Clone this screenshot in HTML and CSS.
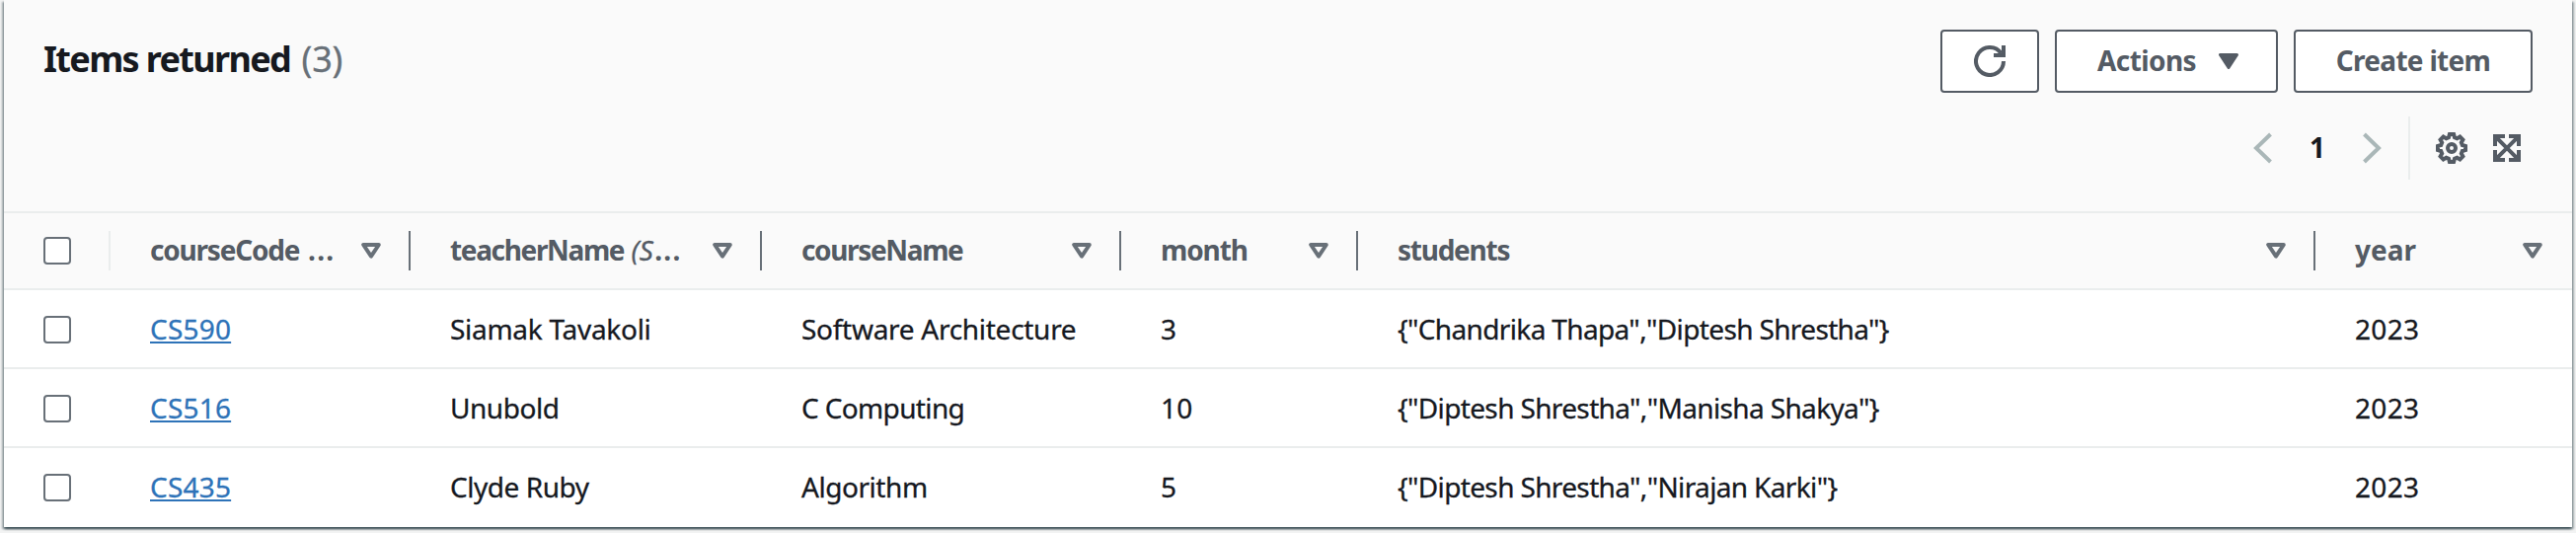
FILE: index.html
```html
<!DOCTYPE html>
<html lang="en">
<head>
<meta charset="utf-8">
<title>Items returned</title>
<link rel="stylesheet" href="styles.css">
</head>
<body>
<svg class="defs" width="0" height="0">
  <symbol id="sort" viewBox="0 0 20 16"><path d="M2.2 2h15.6L10 13.6z" fill="none" stroke="currentColor" stroke-width="4" stroke-linejoin="round"/></symbol>
</svg>
<main class="card">
  <header class="head">
    <h1 class="title"><span class="title-text">Items returned</span> <span class="count">(3)</span></h1>
    <div class="tools">
      <div class="buttons">
        <button class="btn btn-icon" aria-label="Refresh">
          <svg width="32" height="32" viewBox="0 0 32 32" fill="none" stroke="currentColor" stroke-width="4"><path d="M30 16A14 14 0 1 1 27.5 8"/><path d="M30 0v10H20" /></svg>
        </button>
        <button class="btn btn-actions"><span class="t-actions">Actions</span>
          <svg width="20" height="16" viewBox="0 0 20 16"><path d="M1.5 1.5h17L10 14.5z" fill="currentColor" stroke="currentColor" stroke-width="3" stroke-linejoin="round"/></svg>
        </button>
        <button class="btn btn-create"><span class="t-create">Create item</span></button>
      </div>
      <div class="pager">
        <svg class="chev" width="20" height="32" viewBox="0 0 20 32"><path d="M17.500 2L3 16l14.500 14" fill="none" stroke="currentColor" stroke-width="4"/></svg>
        <span class="page">1</span>
        <svg class="chev" width="20" height="32" viewBox="0 0 20 32"><path d="M1.500 2L16 16 1.500 30" fill="none" stroke="currentColor" stroke-width="4"/></svg>
        <span class="rule"></span>
        <svg class="gear" width="32" height="32" viewBox="0 0 32 32" fill="none" stroke="currentColor" stroke-width="4"><path d="M13.900 2h4.200l.9 3.200 2.500 1 2.900-1.600 3 3-1.600 2.900 1 2.500 3.200.9v4.200l-3.200.9-1 2.500 1.600 2.900-3 3-2.900-1.600-2.500 1-.9 3.200h-4.200l-.9-3.200-2.500-1-2.900 1.600-3-3 1.600-2.900-1-2.500-3.200-.9v-4.200l3.200-.9 1-2.500-1.600-2.900 3-3 2.900 1.600 2.500-1z"/><circle cx="16" cy="16" r="4"/></svg>
        <svg class="expand" width="28" height="28" viewBox="0 0 28 28" fill="none" stroke="currentColor" stroke-width="4"><path d="M2 12V2h10M16 2h10v10M26 16v10H16M12 26H2V16M2 2l24 24M26 2L2 26"/></svg>
      </div>
    </div>
  </header>
  <section class="grid">
    <div class="row row-head">
      <div class="cell pick"><span class="box"></span></div>
      <div class="cell th"><span><span class="h-code">courseCode</span> <span class="h-dots">...</span></span><svg class="sort"><use href="#sort"/></svg></div>
      <div class="cell th"><span><span class="h-teacher">teacherName</span> <i class="h-key">(S</i><span class="h-dots">...</span></span><svg class="sort"><use href="#sort"/></svg></div>
      <div class="cell th"><span class="h-name">courseName</span><svg class="sort"><use href="#sort"/></svg></div>
      <div class="cell th"><span class="h-month">month</span><svg class="sort"><use href="#sort"/></svg></div>
      <div class="cell th"><span class="h-students">students</span><svg class="sort"><use href="#sort"/></svg></div>
      <div class="cell th"><span class="h-year">year</span><svg class="sort"><use href="#sort"/></svg></div>
    </div>
    <div class="row">
      <div class="cell pick"><span class="box"></span></div>
      <div class="cell"><a class="link">CS590</a></div>
      <div class="cell"><span class="snug">Siamak Tavakoli</span></div>
      <div class="cell"><span class="snug">Software Architecture</span></div>
      <div class="cell">3</div>
      <div class="cell"><span class="tightest">{"Chandrika Thapa","Diptesh Shrestha"}</span></div>
      <div class="cell num">2023</div>
    </div>
    <div class="row">
      <div class="cell pick"><span class="box"></span></div>
      <div class="cell"><a class="link">CS516</a></div>
      <div class="cell"><span class="tight">Unubold</span></div>
      <div class="cell"><span class="tightest">C Computing</span></div>
      <div class="cell num">10</div>
      <div class="cell"><span class="tightest">{"Diptesh Shrestha","Manisha Shakya"}</span></div>
      <div class="cell num">2023</div>
    </div>
    <div class="row">
      <div class="cell pick"><span class="box"></span></div>
      <div class="cell"><a class="link">CS435</a></div>
      <div class="cell"><span class="tight">Clyde Ruby</span></div>
      <div class="cell"><span class="tight">Algorithm</span></div>
      <div class="cell">5</div>
      <div class="cell"><span class="tightest">{"Diptesh Shrestha","Nirajan Karki"}</span></div>
      <div class="cell num">2023</div>
    </div>
  </section>
</main>
</body>
</html>
```

FILE: styles.css
```css
* { box-sizing: border-box; }
body {
  margin: 0;
  height: 540px;
  overflow: hidden;
  padding: 0 4px 6px;
  background: #f2f3f3;
  font: 28px/40px "Noto Sans", "Open Sans", sans-serif;
  color: #16191f;
}
.defs { display: block; height: 0; }
.card {
  height: 534px;
  background: #fff;
  box-shadow:
    0 2px 2px rgba(0, 28, 36, .5),
    2px 2px 2px rgba(0, 28, 36, .3),
    -2px 2px 2px rgba(0, 28, 36, .3);
}
.head {
  height: 216px;
  padding: 30px 40px 0;
  display: flex;
  justify-content: space-between;
  background: #fafafa;
  border-bottom: 2px solid #eaeded;
}
.title { margin: 8px 0 0; font-size: 36px; line-height: 44px; font-weight: 700; }
.title-text { letter-spacing: -1.65px; }
.count { margin-left: 2px; font-weight: 400; color: #687078; letter-spacing: -.2px; -webkit-text-stroke: .3px; }
.tools { display: flex; flex-direction: column; align-items: flex-end; gap: 24px; }
.buttons { display: flex; gap: 16px; }
.btn {
  height: 64px;
  padding: 0;
  display: flex;
  align-items: center;
  justify-content: center;
  background: #fff;
  border: 2px solid #545b64;
  border-radius: 4px;
  color: #545b64;
  font: inherit;
  font-weight: 700;
  white-space: nowrap;
}
.btn span { padding-bottom: 2px; }
.btn-icon { width: 100px; }
.btn-actions { width: 226px; gap: 23px; padding-left: 3px; }
.btn-create { width: 242px; }
.t-actions { letter-spacing: -.6px; }
.t-create { letter-spacing: -.7px; }
.pager { height: 64px; display: flex; align-items: center; padding-right: 12px; color: #545b64; }
.chev { color: #aab7b8; }
.page { width: 91px; padding: 0 1px 2px 0; text-align: center; font-weight: 700; color: #16191f; }
.rule { width: 2px; height: 64px; margin: 0 26px; background: #eaeded; }
.gear { margin-right: 26px; }
.row {
  height: 80px;
  padding-top: 2px;
  display: grid;
  grid-template-columns: 108px 304px 356px 364px 240px 970px 260px;
  align-items: center;
  border-bottom: 2px solid #eaeded;
}
.row:last-child { padding-top: 0; border-bottom: 0; }
.row-head { height: 78px; padding-top: 0; background: #fafafa; color: #545b64; font-weight: 700; }
.cell {
  height: 40px;
  padding: 0 0 2px 40px;
  display: flex;
  align-items: center;
  white-space: nowrap;
  -webkit-text-stroke: .3px;
}
.cell.pick { padding-bottom: 0; }
.th { padding: 0 28px 0 40px; justify-content: space-between; border-right: 2px solid #687078; -webkit-text-stroke: 0; }
.th > span { padding-bottom: 2px; }
.th:last-child { padding-right: 30px; border-right: 0; }
.row-head .pick { border-right: 2px solid #eaeded; }
.box { width: 28px; height: 28px; border: 2px solid #687078; border-radius: 4px; background: #fff; }
.sort { width: 20px; height: 16px; color: #687078; }
.link {
  color: #2e73b8;
  letter-spacing: .2px;
  text-decoration: underline;
  text-decoration-thickness: 2px;
  text-underline-offset: 2px;
}
.num { letter-spacing: .3px; }
.snug { letter-spacing: -.28px; }
.tight { letter-spacing: -.45px; }
.tightest { letter-spacing: -.64px; }
.h-code { letter-spacing: -1.2px; }
.h-teacher, .h-name { letter-spacing: -1.35px; }
.h-month { letter-spacing: -1.1px; }
.h-students { letter-spacing: -1.25px; }
.h-key { font-weight: 400; -webkit-text-stroke: .3px; }
.h-dots { margin-left: 1.5px; letter-spacing: 1.2px; }
```
